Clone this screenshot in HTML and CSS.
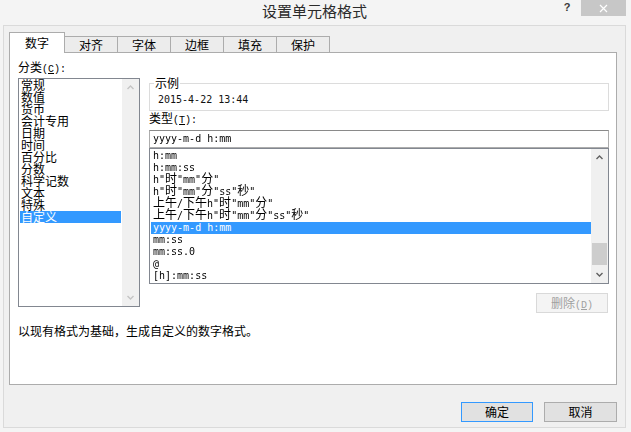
FILE: index.html
```html
<!DOCTYPE html>
<html lang="zh-CN">
<head>
<meta charset="utf-8">
<title>设置单元格格式</title>
<link rel="stylesheet" href="styles.css">
</head>
<body>
<div class="win">
  <div class="titlebar">
    <div class="title">设置单元格格式</div>
    <div class="ctrls">
      <div class="help">?</div>
      <div class="close">
        <svg width="9" height="9" viewBox="0 0 9 9"><path d="M1 1L8 8M8 1L1 8" stroke="#fff" stroke-width="1.2" fill="none"/></svg>
      </div>
    </div>
  </div>
  <div class="client">
    <div class="tabs">
      <div class="tab on">数字</div>
      <div class="tab">对齐</div>
      <div class="tab">字体</div>
      <div class="tab">边框</div>
      <div class="tab">填充</div>
      <div class="tab">保护</div>
    </div>
    <div class="panel">
      <div class="cols">
        <div class="leftcol">
          <div class="lab">分类<span class="lat">(<u>C</u>):</span></div>
          <div class="catlist">
            <ul class="cats">
              <li>常规</li>
              <li>数值</li>
              <li>货币</li>
              <li>会计专用</li>
              <li>日期</li>
              <li>时间</li>
              <li>百分比</li>
              <li>分数</li>
              <li>科学记数</li>
              <li>文本</li>
              <li>特殊</li>
              <li class="sel">自定义</li>
            </ul>
            <div class="vscroll dis">
              <div class="arr"><svg width="7" height="5" viewBox="0 0 7 5"><path d="M0.5 4L3.5 1L6.5 4" stroke="#c4c4c4" stroke-width="1.4" fill="none"/></svg></div>
              <div class="fill"></div>
              <div class="arr"><svg width="7" height="5" viewBox="0 0 7 5"><path d="M0.5 1L3.5 4L6.5 1" stroke="#c4c4c4" stroke-width="1.4" fill="none"/></svg></div>
            </div>
          </div>
        </div>
        <div class="rightcol">
          <fieldset class="sample">
            <legend>示例</legend>
            <div class="sampletext">2015-4-22 13:44</div>
          </fieldset>
          <div class="lab lab2">类型<span class="lat">(<u>T</u>):</span></div>
          <div class="input">yyyy-m-d h:mm</div>
          <div class="typelist">
            <ul class="types">
              <li>h:mm</li>
              <li>h:mm:ss</li>
              <li>h"<i>时</i>"mm"<i>分</i>"</li>
              <li>h"<i>时</i>"mm"<i>分</i>"ss"<i>秒</i>"</li>
              <li><i>上午</i>/<i>下午</i>h"<i>时</i>"mm"<i>分</i>"</li>
              <li><i>上午</i>/<i>下午</i>h"<i>时</i>"mm"<i>分</i>"ss"<i>秒</i>"</li>
              <li class="sel">yyyy-m-d h:mm</li>
              <li>mm:ss</li>
              <li>mm:ss.0</li>
              <li>@</li>
              <li>[h]:mm:ss</li>
            </ul>
            <div class="vscroll">
              <div class="arr"><svg width="7" height="5" viewBox="0 0 7 5"><path d="M0.5 4L3.5 1L6.5 4" stroke="#606060" stroke-width="1.4" fill="none"/></svg></div>
              <div class="fill"></div>
              <div class="thumb"></div>
              <div class="arr"><svg width="7" height="5" viewBox="0 0 7 5"><path d="M0.5 1L3.5 4L6.5 1" stroke="#606060" stroke-width="1.4" fill="none"/></svg></div>
            </div>
          </div>
          <div class="delrow"><div class="btn del">删除<span class="lat">(<u>D</u>)</span></div></div>
        </div>
      </div>
      <div class="desc">以现有格式为基础，生成自定义的数字格式。</div>
    </div>
    <div class="buttons">
      <div class="btn ok">确定</div>
      <div class="btn cancel">取消</div>
    </div>
  </div>
</div>
</body>
</html>
```

FILE: styles.css
```css
* { box-sizing: border-box; }
html, body { margin: 0; padding: 0; }
body {
  width: 631px;
  height: 432px;
  overflow: hidden;
  background: #f4f4f4;
  font: 12px/12px "Noto Sans CJK SC", sans-serif;
  color: #000;
}
.win { width: 629px; padding: 0 3px; }
.titlebar {
  height: 25px;
  display: grid;
  grid-template-columns: 1fr auto 1fr;
}
.title {
  grid-column: 2;
  font-size: 15px;
  line-height: 21px;
  color: #2b2b2b;
}
.ctrls {
  grid-column: 3;
  display: flex;
  justify-content: flex-end;
  align-items: flex-start;
}
.help {
  width: 28px;
  text-align: center;
  font: bold 11px/13px "Liberation Sans", sans-serif;
  color: #3a3a3a;
  padding-top: 1px;
}
.close {
  width: 45px;
  height: 16px;
  background: #c7c7c7;
  display: flex;
  align-items: center;
  justify-content: center;
}
.close svg { display: block; }

.client {
  height: 403px;
  border: 1px solid #dadada;
  background: #f0f0f0;
  padding: 6px 8px 6px 5px;
}
.tabs {
  display: flex;
  align-items: flex-end;
  height: 20px;
}
.tab {
  width: 54px;
  height: 16px;
  margin-left: -1px;
  border: 1px solid #acacac;
  border-bottom: none;
  background: #ececec;
  text-align: center;
  line-height: 15px;
}
.tab.on {
  position: relative;
  z-index: 1;
  width: 56px;
  height: 21px;
  margin-left: 0;
  margin-bottom: -1px;
  background: #fff;
  line-height: 20px;
}
.panel {
  height: 333px;
  border: 1px solid #acacac;
  background: #fff;
  padding: 8px 7px 0 8px;
}
.cols { display: flex; gap: 9px; align-items: flex-start; }
.leftcol { width: 122px; }
.rightcol { flex: 1; margin-top: 16px; }
.lab { height: 12px; line-height: 12px; white-space: nowrap; }
.lat { font: 10px "Liberation Mono", monospace; }
.lat u { text-decoration-thickness: 1px; }

.catlist {
  margin-top: 5px;
  height: 229px;
  border: 1px solid #828790;
  display: flex;
}
.cats {
  list-style: none;
  margin: 0;
  padding: 0 1px;
  flex: 1;
}
.cats li {
  height: 12px;
  line-height: 11px;
  padding-left: 1px;
  white-space: nowrap;
}
.sel { background: #3399ff; color: #fff; }

.vscroll {
  width: 17px;
  background: #f0f0f0;
  display: flex;
  flex-direction: column;
}
.vscroll .arr {
  height: 17px;
  display: flex;
  align-items: center;
  justify-content: center;
}
.vscroll .arr svg { display: block; }
.vscroll .fill { flex: 1; }
.vscroll .thumb {
  height: 22px;
  margin: 0 1px 1px;
  background: #cdcdcd;
}

.sample {
  margin: 0;
  padding: 0 4px 4px;
  border: 1px solid #dcdcdc;
  min-width: 0;
}
.sample legend {
  padding: 0 1px;
  line-height: 12px;
}
.sampletext {
  margin: 5px 0 0 4px;
  font: 10px/12px "DejaVu Sans Mono", monospace;
  color: #111;
}
.lab2 { margin-top: 1px; }
.input {
  margin-top: 6px;
  height: 18px;
  border: 1px solid #abadb3;
  border-top-color: #8a8a8a;
  padding-left: 3px;
  font: 10px/16px "DejaVu Sans Mono", monospace;
  white-space: nowrap;
}
.input, .types li:not(.sel) { filter: grayscale(1); }
.typelist {
  height: 136px;
  border: 1px solid #828790;
  display: flex;
}
.types {
  list-style: none;
  margin: 0;
  padding: 1px 0 1px 1px;
  flex: 1;
}
.types li {
  height: 12px;
  padding-left: 2px;
  font: 10px/12px "DejaVu Sans Mono", monospace;
  white-space: nowrap;
}
.types li i {
  font: normal 12px/0 "Noto Sans CJK SC", sans-serif;
}
.delrow {
  margin-top: 9px;
  padding-right: 1px;
  display: flex;
  justify-content: flex-end;
}
.btn {
  height: 20px;
  border: 1px solid #acacac;
  background: #e1e1e1;
  text-align: center;
  line-height: 18px;
}
.del {
  width: 72px;
  border-color: #d9d9d9;
  background: #f4f4f4;
  color: #a0a0a0;
}
.desc {
  margin-top: 12px;
  line-height: 12px;
}
.buttons {
  margin-top: 17px;
  display: flex;
  justify-content: flex-end;
  gap: 11px;
}
.ok { width: 72px; border-color: #3399ff; }
.cancel { width: 73px; }
```
